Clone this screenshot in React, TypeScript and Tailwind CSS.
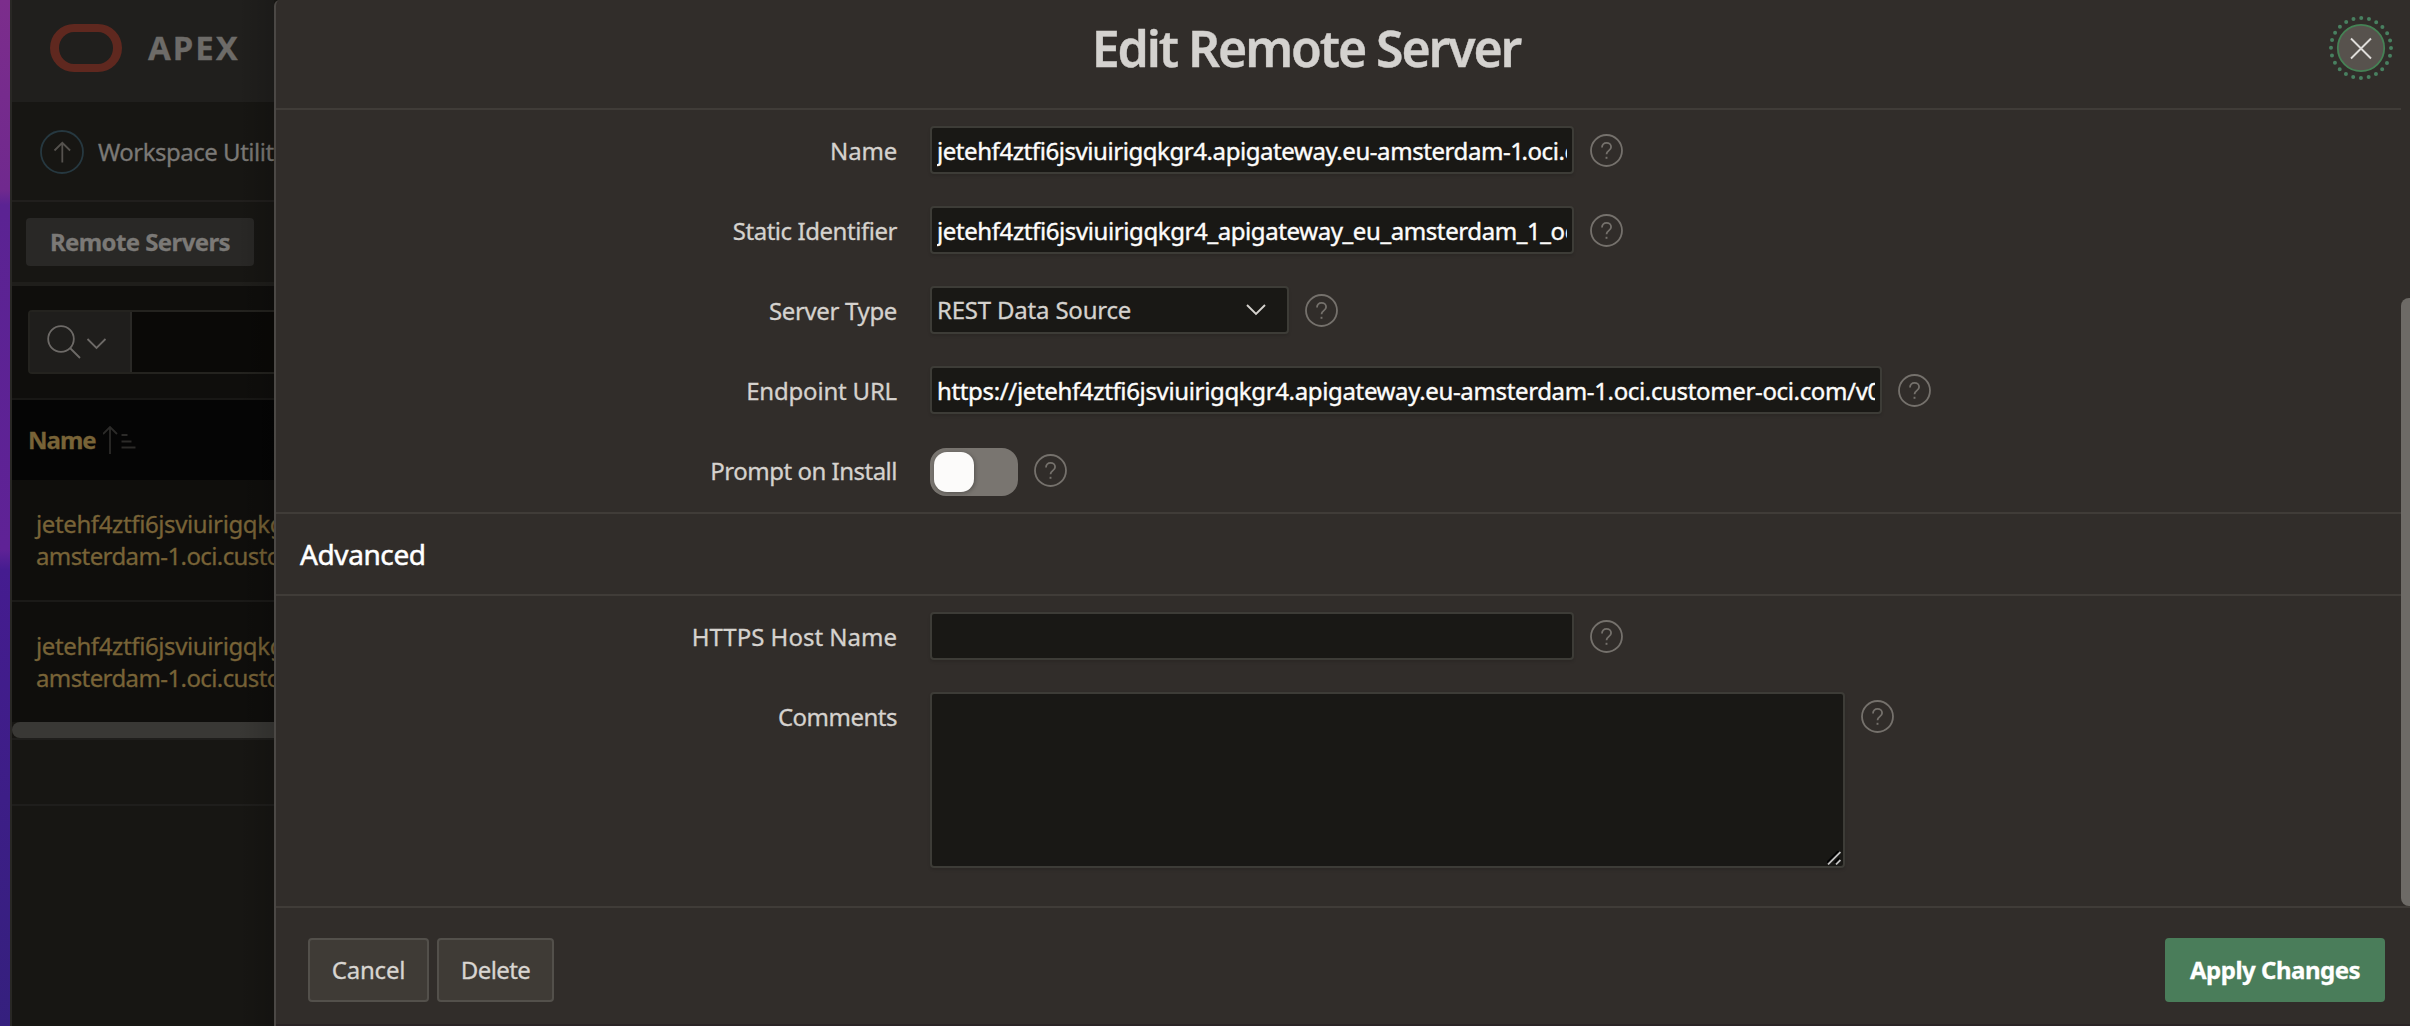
import React from "react";

const FIELD = "box-border border-2 border-[#3d3c37] rounded-[4px] bg-[#191815] shadow-[0_2px_3px_rgba(0,0,0,0.12)] text-[24px] overflow-hidden whitespace-nowrap text-[#fdfcfb]";

function Help() {
  return (
    <svg className="ml-4 mt-2 h-[33px] w-[33px] shrink-0" viewBox="0 0 33 33" fill="none" stroke="#75716c">
      <circle cx="16.5" cy="16.5" r="15.5" strokeWidth="1.8" />
      <path d="M12 13.5c0-3 2-4.700 4.500-4.700s4.600 1.800 4.600 4.200c0 3.800-4.600 3.500-4.600 7.200" strokeWidth="1.800" />
      <path d="M16.500 22.800v2" strokeWidth="1.900" />
    </svg>
  );
}

function Row({ label, spacing, tall, children }: { label: string; spacing: string; tall?: boolean; children: React.ReactNode }) {
  return (
    <div className={tall ? "flex h-[214px] items-start" : "flex h-[80px] items-start"}>
      <div className="w-[621px] shrink-0 text-right text-[24px] leading-[49px] text-[#d5d2ce] [-webkit-text-stroke:0.3px]">
        <span className={spacing}>{label}</span>
      </div>
      <div className="flex pl-[33px]">
        {children}
        <Help />
      </div>
    </div>
  );
}

function Behind() {
  return (
    <div className="relative flex h-[1026px] w-[264px] shrink-0 flex-col overflow-hidden border-l-2 border-[#292825] bg-[#171613] whitespace-nowrap [-webkit-text-stroke:0.3px]">
      <div className="flex h-[102px] shrink-0 items-center bg-[#201f1d] pb-[6px] pl-[38px]">
        <div className="box-border h-12 w-[72px] rounded-full border-x-[9px] border-y-8 border-[#5f281f]" />
        <span className="ml-[26px] text-[33px] font-bold tracking-[2px] text-[#6d6b68]">APEX</span>
      </div>
      <div className="flex h-[100px] shrink-0 items-center border-b-2 border-[#211f1d] pt-[2px] pl-7">
        <svg className="h-11 w-11 shrink-0" viewBox="0 0 44 44" fill="none">
          <circle cx="22" cy="22" r="21" stroke="#263840" strokeWidth="1.800" />
          <path d="M22.300 32.500V13M14.500 20.500l7.800-7.700 7.800 7.700" stroke="#55524e" strokeWidth="1.800" />
        </svg>
        <span className="ml-[14px] text-[24px] tracking-[-0.5px] text-[#7b7976]">Workspace Utilities</span>
      </div>
      <div className="flex h-[84px] shrink-0 items-center border-b-4 border-[#1f1e1b] pl-[14px]">
        <div className="flex h-12 w-[228px] items-center justify-center rounded-[4px] bg-[#292826] text-[24px] font-bold tracking-[-0.6px] text-[#7b7976]">Remote Servers</div>
      </div>
      <div className="flex h-[112px] shrink-0 items-center bg-[#0f0e0c] pl-4">
        <div className="flex h-16 w-[400px] shrink-0 rounded-[4px] border-2 border-[#24231f] bg-[#0a0907]">
          <div className="flex h-full w-[102px] shrink-0 items-center border-r-2 border-[#2a2926] bg-[#1f1e1c] pl-[17px]">
            <svg className="h-[34px] w-[60px]" viewBox="0 0 60 34" fill="none" stroke="#6d6a67" strokeWidth="1.800">
              <circle cx="14" cy="14" r="12.800" />
              <path d="M23 23l10 10M40.500 14l9 9 9-9" />
            </svg>
          </div>
        </div>
      </div>
      <div className="flex h-[82px] shrink-0 items-center border-t-2 border-[#181715] bg-[#050505] pl-4">
        <span className="text-[24px] font-bold tracking-[-1px] text-[#786337]">Name</span>
        <svg className="ml-[7px] h-7 w-[33px]" viewBox="0 0 33 28" fill="none" stroke="#2c2b29" strokeWidth="1.800">
          <path d="M7 28V1M0 8l7-7 7 7M18.500 9h6M18.500 15.500h10M18.500 21.500h14" />
        </svg>
      </div>
      {[0, 1].map((i) => (
        <div key={i} className={i === 0 ? "h-[122px] shrink-0 border-b-2 border-[#1b1a18] bg-[#0f0e0c] pt-7 pl-6" : "h-[120px] shrink-0 bg-[#0f0e0c] pt-7 pl-6"}>
          <div className="text-[24px] leading-8 tracking-[-0.38px] text-[#786337]">jetehf4ztfi6jsviuirigqkg</div>
          <div className="text-[24px] leading-8 tracking-[-0.6px] text-[#786337]">amsterdam-1.oci.custo</div>
        </div>
      ))}
      <div className="h-4 w-[400px] shrink-0 rounded-full bg-[#393835]" />
      <div className="h-[68px] shrink-0 border-y-2 border-[#1f1e1c]" />
      <div className="absolute top-0 right-0 h-full w-9 bg-gradient-to-r from-transparent to-black/15" />
    </div>
  );
}

export default function App() {
  return (
    <div className="flex h-[1026px] w-[2410px] overflow-hidden bg-[#171613] font-['Noto_Sans',sans-serif]">
      <div className="h-full w-[10px] shrink-0 bg-[linear-gradient(#7c2d8c_0px,#70298e_190px,#5b2393_205px,#5f2296_550px,#451c90_570px,#35207e_1026px)]" />
      <Behind />
      <main className="flex h-full w-[2136px] shrink-0 flex-col rounded-tl-[6px] border-l-2 border-[#4b4845] bg-[#312d2a]">
        <header className="relative mr-[9px] flex h-[110px] shrink-0 items-center justify-center border-b-2 border-[#403c38]">
          <h1 className="pr-[65px] pb-[11px] text-[50px] font-semibold tracking-[-2.1px] whitespace-nowrap text-[#d4d2cf] [-webkit-text-stroke:0.4px]">Edit Remote Server</h1>
          <svg className="absolute top-4 right-[8px] h-16 w-16" viewBox="0 0 64 64" fill="none">
            <circle cx="32" cy="32" r="30" stroke="#488060" strokeWidth="4" strokeLinecap="round" strokeDasharray="0 7.854" />
            <circle cx="32" cy="32" r="23.200" fill="#57524d" stroke="#458255" strokeWidth="1.800" />
            <path d="M22 22.500l20 20M42 22.500l-20 20" stroke="#dedcd9" strokeWidth="1.900" />
          </svg>
        </header>
        <div className="flex h-[796px] shrink-0 justify-between">
          <div className="w-[2125px]">
            <div className="h-[402px] pt-4">
              <Row label="Name" spacing="tracking-[-0.2px]">
                <div className={`${FIELD} h-12 w-[644px] px-[5px] leading-[46px]`}><div className="overflow-hidden tracking-[-0.43px] [-webkit-text-stroke:0.4px]">jetehf4ztfi6jsviuirigqkgr4.apigateway.eu-amsterdam-1<span className="-ml-[2px]">.oci.customer-oci.com</span></div></div>
              </Row>
              <Row label="Static Identifier" spacing="tracking-[-0.45px]">
                <div className={`${FIELD} h-12 w-[644px] px-[5px] leading-[46px]`}><div className="overflow-hidden tracking-[-0.4px] [-webkit-text-stroke:0.4px]">jetehf4ztfi6jsviuirigqkgr4_apigateway_eu_amsterdam_1_oci_customer</div></div>
              </Row>
              <Row label="Server Type" spacing="tracking-[-0.35px]">
                <div className={`${FIELD} flex h-12 w-[359px] items-center justify-between pr-[21px] pl-[5px]`}>
                  <span className="tracking-[-0.2px] text-[#d5d2ce] [-webkit-text-stroke:0.3px]">REST Data Source</span>
                  <svg className="h-3 w-5" viewBox="0 0 20 12" fill="none" stroke="#d5d2ce" strokeWidth="1.900"><path d="M1 1l9 9 9-9" /></svg>
                </div>
              </Row>
              <Row label="Endpoint URL" spacing="tracking-[-0.2px]">
                <div className={`${FIELD} h-12 w-[952px] px-[5px] leading-[46px]`}><div className="overflow-hidden tracking-[-0.35px] [-webkit-text-stroke:0.4px]">https://jetehf4ztfi6jsviuirigqkgr4.apigateway.eu-amsterdam-1.oci.customer-oci.com/v0/</div></div>
              </Row>
              <Row label="Prompt on Install" spacing="tracking-[-0.5px]">
                <div className="mt-[2px] h-12 w-[88px] rounded-2xl bg-[#797570] p-1"><div className="h-10 w-10 rounded-[13px] bg-[#fcfbfa] shadow-[1px_1px_4px_rgba(0,0,0,0.3)]" /></div>
              </Row>
            </div>
            <div className="flex h-[84px] items-center border-y-2 border-[#403c38] pl-6 text-[28px] tracking-[-0.4px] text-white [-webkit-text-stroke:0.5px]"><span>Advanced</span></div>
            <div className="pt-4">
              <Row label="HTTPS Host Name" spacing="tracking-[0px]">
                <div className={`${FIELD} h-12 w-[644px]`} />
              </Row>
              <Row label="Comments" spacing="tracking-[-0.5px]" tall>
                <div className={`${FIELD} flex h-[176px] w-[915px] items-end justify-end pr-[2px] pb-px`}>
                  <svg className="h-[14px] w-[14px]" viewBox="0 0 14 14" fill="none"><path d="M.5 12.500L13 0M8.500 12.500L13 8" stroke="#000" strokeWidth="4" /><path d="M1 13.500L13.500 1M9 13.500L13.500 9" stroke="#bdbcbb" strokeWidth="1.800" /></svg>
                </div>
              </Row>
            </div>
          </div>
          <div className="mt-[188px] h-[608px] w-[9px] rounded-l-lg bg-[#6d6a66]" />
        </div>
        <footer className="flex h-[120px] shrink-0 items-start border-t-2 border-b-2 border-t-[#403c38] border-b-[#2a2425] pt-[30px] pr-[25px] pl-8 text-[24px] [-webkit-text-stroke:0.3px]">
          <button className="h-16 w-[121px] rounded-[4px] border-2 border-[#53504b] bg-[#3f3b36] tracking-[-0.2px] text-[#d8d5d1]">Cancel</button>
          <button className="ml-2 h-16 w-[117px] rounded-[4px] border-2 border-[#53504b] bg-[#3f3b36] tracking-[-0.6px] text-[#d8d5d1]">Delete</button>
          <button className="ml-auto h-16 w-[220px] rounded-[4px] bg-[#4a7d5a] font-bold tracking-[-0.5px] whitespace-nowrap text-white">Apply Changes</button>
        </footer>
      </main>
    </div>
  );
}
